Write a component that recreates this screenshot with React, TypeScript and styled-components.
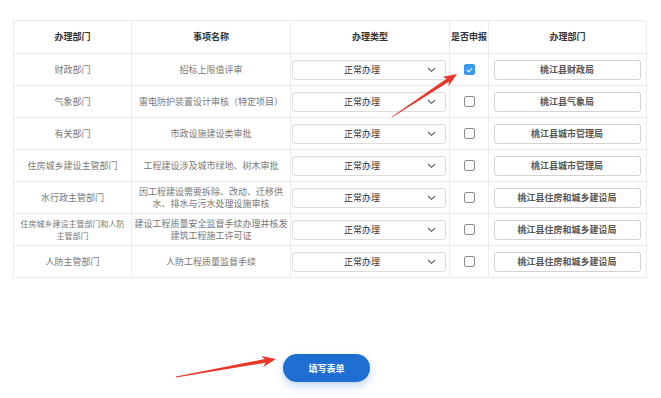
import React from "react";
import styled, { createGlobalStyle } from "styled-components";

const Global = createGlobalStyle`
  html, body { margin: 0; padding: 0; background: #fff; }
  body { font-family: "Noto Sans CJK SC", "Noto Sans", sans-serif; }
`;

const Page = styled.div`
  position: relative;
  width: 661px;
  height: 398px;
  overflow: hidden;
  background: #fff;
`;

const TableWrap = styled.div`
  padding: 20px 15px 0 13px;
`;

const Grid = styled.div`
  display: grid;
  grid-template-columns: 118px 159px 159px 39px 158px;
  border-top: 1px solid #ececec;
  border-left: 1px solid #ececec;
  width: 633px;
  box-sizing: border-box;
`;

const Cell = styled.div<{ $head?: boolean; $tight?: boolean }>`
  box-sizing: border-box;
  border-right: 1px solid #ececec;
  border-bottom: 1px solid #ececec;
  display: flex;
  align-items: center;
  justify-content: center;
  text-align: center;
  padding: 0 ${(p) => (p.$tight ? 0 : 3)}px;
  font-size: ${(p) => (p.$tight ? 8 : 9)}px;
  line-height: 12px;
  color: ${(p) => (p.$head ? "#333" : "#777")};
  font-weight: ${(p) => (p.$head ? 700 : 400)};
  white-space: nowrap;
  height: ${(p) => (p.$head ? 33 : 32)}px;
`;

const SelectBox = styled.div`
  box-sizing: border-box;
  width: 157px;
  height: 20px;
  margin-left: -2px;
  border: 1px solid #dcdcdc;
  border-radius: 3px;
  display: flex;
  align-items: center;
  justify-content: space-between;
  padding: 0 9px 0 51px;
  font-size: 9px;
  color: #333;
  background: #fff;
`;

const Chevron = styled.svg`
  width: 9px;
  height: 6px;
  display: block;
`;

const Check = styled.div<{ $on?: boolean }>`
  box-sizing: border-box;
  width: 11px;
  height: 11px;
  border-radius: 2px;
  border: 1px solid ${(p) => (p.$on ? "#3b97ee" : "#8c8c8c")};
  background: ${(p) => (p.$on ? "#3b97ee" : "#fff")};
  display: flex;
  align-items: center;
  justify-content: center;
`;

const DeptBox = styled.div`
  box-sizing: border-box;
  width: 147px;
  height: 20px;
  margin-left: -1px;
  border: 1px solid #d2d2d2;
  border-radius: 3px;
  display: flex;
  align-items: center;
  justify-content: center;
  font-size: 9px;
  font-weight: 700;
  color: #555;
  background: #fff;
`;

const ButtonRow = styled.div`
  display: flex;
  justify-content: center;
  padding-right: 8px;
  margin-top: 76px;
`;

const Button = styled.button`
  width: 87px;
  height: 28px;
  border: none;
  border-radius: 14px;
  background: #1f6fd3;
  color: #fff;
  font-family: "Noto Sans CJK SC", "Noto Sans", sans-serif;
  font-size: 9px;
  font-weight: 700;
  box-shadow: 0 4px 8px rgba(31, 111, 211, 0.28);
  cursor: pointer;
`;

const Overlay = styled.svg`
  position: absolute;
  left: 0;
  top: 0;
  pointer-events: none;
`;

type Row = {
  dept: React.ReactNode;
  item: React.ReactNode;
  checked?: boolean;
  office: string;
  tight?: boolean;
};

const rows: Row[] = [
  { dept: "财政部门", item: "招标上限值评审", checked: true, office: "桃江县财政局" },
  { dept: "气象部门", item: "雷电防护装置设计审核（特定项目）", office: "桃江县气象局" },
  { dept: "有关部门", item: "市政设施建设类审批", office: "桃江县城市管理局" },
  { dept: "住房城乡建设主管部门", item: "工程建设涉及城市绿地、树木审批", office: "桃江县城市管理局" },
  {
    dept: "水行政主管部门",
    item: (
      <>
        因工程建设需要拆除、改动、迁移供
        <br />
        水、排水与污水处理设施审核
      </>
    ),
    office: "桃江县住房和城乡建设局",
  },
  {
    dept: (
      <>
        住房城乡建设主管部门和人防
        <br />
        主管部门
      </>
    ),
    tight: true,
    item: (
      <>
        建设工程质量安全监督手续办理并核发
        <br />
        建筑工程施工许可证
      </>
    ),
    office: "桃江县住房和城乡建设局",
  },
  { dept: "人防主管部门", item: "人防工程质量监督手续", office: "桃江县住房和城乡建设局" },
];

function arrowPoints(tx: number, ty: number, hx: number, hy: number) {
  const dx = hx - tx;
  const dy = hy - ty;
  const len = Math.hypot(dx, dy);
  const ux = dx / len;
  const uy = dy / len;
  const px = -uy;
  const py = ux;
  const head = 14;
  const bx = hx - ux * head;
  const by = hy - uy * head;
  const pt = (x: number, y: number) => `${x.toFixed(1)},${y.toFixed(1)}`;
  return [
    pt(tx + px * 0.4, ty + py * 0.4),
    pt(bx + ux * 3 + px * 1.9, by + uy * 3 + py * 1.9),
    pt(bx + px * 5.5, by + py * 5.5),
    pt(hx, hy),
    pt(bx - px * 5.5, by - py * 5.5),
    pt(bx + ux * 3 - px * 1.9, by + uy * 3 - py * 1.9),
    pt(tx - px * 0.4, ty - py * 0.4),
  ].join(" ");
}

const heads = ["办理部门", "事项名称", "办理类型", "是否申报", "办理部门"];

export default function App() {
  return (
    <Page>
      <Global />
      <TableWrap>
        <Grid>
          {heads.map((h, i) => (
            <Cell key={i} $head>
              {h}
            </Cell>
          ))}
          {rows.map((r, i) => (
            <React.Fragment key={i}>
              <Cell $tight={r.tight}>{r.dept}</Cell>
              <Cell>{r.item}</Cell>
              <Cell>
                <SelectBox>
                  <span>正常办理</span>
                  <Chevron viewBox="0 0 9 6">
                    <path d="M1 1 L4.5 4.5 L8 1" fill="none" stroke="#666" strokeWidth="1.1" />
                  </Chevron>
                </SelectBox>
              </Cell>
              <Cell>
                <Check $on={r.checked}>
                  {r.checked && (
                    <svg width="7" height="6" viewBox="0 0 7 6">
                      <path d="M1 3 L3 5 L6 1" fill="none" stroke="#fff" strokeWidth="1.1" />
                    </svg>
                  )}
                </Check>
              </Cell>
              <Cell>
                <DeptBox>{r.office}</DeptBox>
              </Cell>
            </React.Fragment>
          ))}
        </Grid>
      </TableWrap>
      <ButtonRow>
        <Button>填写表单</Button>
      </ButtonRow>
      <Overlay width="661" height="398" viewBox="0 0 661 398">
        <polygon points={arrowPoints(392, 117, 457, 74)} fill="#e8372b" />
        <polygon points={arrowPoints(176, 377, 276, 359)} fill="#e8372b" />
      </Overlay>
    </Page>
  );
}
